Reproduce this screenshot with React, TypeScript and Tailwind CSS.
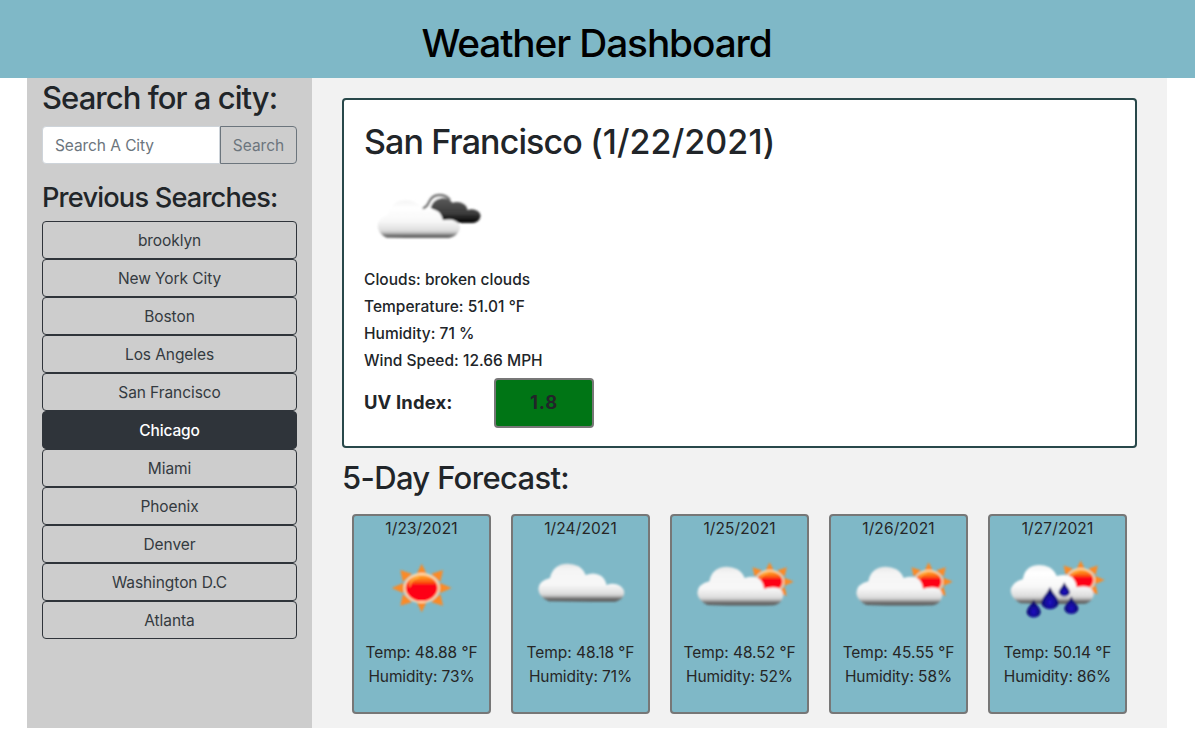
import type { ReactNode } from "react";

const cities = [
  "brooklyn",
  "New York City",
  "Boston",
  "Los Angeles",
  "San Francisco",
  "Chicago",
  "Miami",
  "Phoenix",
  "Denver",
  "Washington D.C",
  "Atlanta",
];

const activeCity = "Chicago";

const conditions = [
  "Clouds: broken clouds",
  "Temperature: 51.01 °F",
  "Humidity: 71 %",
  "Wind Speed: 12.66 MPH",
];

function Gradients() {
  return (
    <svg width="0" height="0" className="absolute" aria-hidden="true">
      <defs>
        <linearGradient id="cloud" x1="0" y1="0" x2="0" y2="1">
          <stop offset="0" stopColor="#e6e6e6" />
          <stop offset="0.15" stopColor="#f4f4f4" />
          <stop offset="0.55" stopColor="#f8f8f8" />
          <stop offset="0.8" stopColor="#dcdcdc" />
          <stop offset="0.86" stopColor="#b4b4b4" />
          <stop offset="0.91" stopColor="#747474" />
          <stop offset="1" stopColor="#555555" />
        </linearGradient>
        <linearGradient id="paleCloud" x1="0" y1="0" x2="0" y2="1">
          <stop offset="0" stopColor="#f4f4f4" />
          <stop offset="0.2" stopColor="#ffffff" />
          <stop offset="0.55" stopColor="#f8f8f8" />
          <stop offset="0.8" stopColor="#dddddd" />
          <stop offset="0.87" stopColor="#b8b8b8" />
          <stop offset="0.92" stopColor="#747474" />
          <stop offset="1" stopColor="#5a5a5a" />
        </linearGradient>
        <linearGradient id="darkCloud" x1="0" y1="0" x2="0" y2="1">
          <stop offset="0" stopColor="#5a5a5a" />
          <stop offset="0.6" stopColor="#3c3c3c" />
          <stop offset="0.85" stopColor="#181818" />
          <stop offset="1" stopColor="#000000" />
        </linearGradient>
        <linearGradient id="sun" x1="0" y1="0" x2="0" y2="1">
          <stop offset="0" stopColor="#ffb23a" />
          <stop offset="0.15" stopColor="#ff8c1c" />
          <stop offset="0.32" stopColor="#fb4a10" />
          <stop offset="0.4" stopColor="#fd0015" />
          <stop offset="1" stopColor="#ff0018" />
        </linearGradient>
        <radialGradient id="drop" cx="0.5" cy="0.68" r="0.55">
          <stop offset="0" stopColor="#1f14c4" />
          <stop offset="0.5" stopColor="#120a96" />
          <stop offset="1" stopColor="#07045a" />
        </radialGradient>
        <filter id="soft" x="-10%" y="-10%" width="120%" height="120%">
          <feGaussianBlur stdDeviation="2.6" />
        </filter>
      </defs>
    </svg>
  );
}

function BrokenClouds() {
  return (
    <svg width="140" height="70" viewBox="0 0 420 210" className="block">
      <g filter="url(#soft)">
        <path
          d="M186 87 Q202 80 207 66 Q216 46 238 45 Q258 45 270 60"
          fill="none"
          stroke="#777777"
          strokeWidth="7"
        />
        <path
          d="M212 84 Q218 59 246 55 Q266 54 277 68 Q297 62 311 72 Q322 79 322 90 Q340 85 353 93 Q364 102 361 112 Q356 128 338 129 L282 129 L250 122 L236 96 Z"
          fill="url(#darkCloud)"
        />
        <path
          d="M209 84 Q216 60 240 51"
          fill="none"
          stroke="#eeeeee"
          strokeWidth="3"
        />
        <path
          d="M80 173 Q56 162 53 140 Q52 114 84 104 Q90 74 116 64 Q150 54 176 74 Q186 82 192 90 Q222 82 240 100 Q247 110 248 121 Q282 112 297 132 Q304 148 292 160 Q284 171 266 174 Q170 175 80 173 Z"
          fill="url(#paleCloud)"
        />
      </g>
    </svg>
  );
}

const rays =
  "M0 -73 L16 -40 L-16 -40 Z M64 -54 L56 -18 L28 -42 Z M90 0 L54 16 L54 -16 Z M64 53 L28 42 L56 18 Z M0 73 L-16 40 L16 40 Z M-64 53 L-56 18 L-28 42 Z M-90 0 L-54 -16 L-54 16 Z M-64 -54 L-28 -42 L-56 -18 Z";

function SunShape({ transform }: { transform: string }) {
  return (
    <g transform={transform}>
      <path d={rays} fill="#fb8a26" />
      <ellipse rx="51" ry="42" fill="url(#sun)" stroke="#ffe0b4" strokeWidth="6" />
      <path
        d="M-36 -6 Q-34 -26 -10 -32"
        fill="none"
        stroke="#ffc94a"
        strokeWidth="6"
        strokeLinecap="round"
        opacity="0.6"
      />
    </g>
  );
}

function SunIcon() {
  return (
    <svg width="135" height="75" viewBox="-48 0 405 225" className="block">
      <g filter="url(#soft)">
        <SunShape transform="translate(155 114)" />
      </g>
    </svg>
  );
}

function CloudIcon() {
  return (
    <svg width="135" height="75" viewBox="-51 0 405 225" className="block">
      <g filter="url(#soft)">
        <path
          d="M56 154 Q27 142 25 117 Q26 92 60 84 Q66 54 92 44 Q120 36 146 49 Q160 58 167 75 Q194 64 214 78 Q228 90 229 105 Q252 97 270 107 Q286 118 282 134 Q278 149 256 155 Q150 156 56 154 Z"
          fill="url(#cloud)"
        />
      </g>
    </svg>
  );
}

function SunCloudIcon() {
  return (
    <svg width="135" height="75" viewBox="-54 0 405 225" className="block">
      <g filter="url(#soft)">
        <SunShape transform="translate(239 95) scale(0.8)" />
        <path
          d="M52 165 Q25 152 22 130 Q23 102 58 94 Q64 62 90 53 Q118 45 142 58 Q158 68 164 84 Q186 76 204 84 Q220 94 222 116 Q256 106 272 118 Q283 130 278 144 Q273 161 252 166 Q150 168 52 165 Z"
          fill="url(#cloud)"
        />
      </g>
    </svg>
  );
}

const dropPath =
  "M0 -33 Q7 -18 19 -4 Q30 12 24 22 Q15 34 0 34 Q-15 34 -24 22 Q-30 12 -19 -4 Q-7 -18 0 -33 Z";

function RainIcon() {
  return (
    <svg width="135" height="75" viewBox="-30 0 405 225" className="block">
      <g filter="url(#soft)">
        <SunShape transform="translate(242 90) scale(0.8)" />
        <path
          d="M62 160 Q35 148 32 124 Q33 98 68 88 Q74 56 98 48 Q124 41 148 52 Q164 62 170 78 Q198 70 216 82 Q228 94 230 112 Q258 104 274 116 Q285 128 279 142 Q273 157 256 161 Q160 163 62 160 Z"
          fill="url(#paleCloud)"
        />
        <path d={dropPath} transform="translate(150 144)" fill="url(#drop)" />
        <path d={dropPath} transform="translate(101 175) scale(0.8)" fill="url(#drop)" />
        <path d={dropPath} transform="translate(214 165) scale(0.8)" fill="url(#drop)" />
        <path d={dropPath} transform="translate(193 118) scale(0.64)" fill="url(#drop)" />
      </g>
    </svg>
  );
}

const forecast: { date: string; temp: string; humidity: string; icon: ReactNode }[] = [
  { date: "1/23/2021", temp: "48.88", humidity: "73", icon: <SunIcon /> },
  { date: "1/24/2021", temp: "48.18", humidity: "71", icon: <CloudIcon /> },
  { date: "1/25/2021", temp: "48.52", humidity: "52", icon: <SunCloudIcon /> },
  { date: "1/26/2021", temp: "45.55", humidity: "58", icon: <SunCloudIcon /> },
  { date: "1/27/2021", temp: "50.14", humidity: "86", icon: <RainIcon /> },
];

function Sidebar() {
  return (
    <aside className="w-[285px] shrink-0 bg-[#cdcdcd] px-[15px]">
      <h2 className="h-[39px] text-[31px] leading-[39px] font-medium tracking-[-0.95px] whitespace-nowrap">
        Search for a city:
      </h2>
      <form className="mt-[9px] flex h-[38px]" onSubmit={(e) => e.preventDefault()}>
        <input
          type="text"
          placeholder="Search A City"
          className="w-[178px] rounded-l border border-[#ced4da] bg-white px-3 pt-0.5 tracking-[-0.08px] outline-none placeholder:text-[#6c757d]"
        />
        <button
          type="submit"
          className="flex-1 rounded-r border border-[#6c757d] pt-0.5 text-[#6c757d]"
        >
          Search
        </button>
      </form>
      <h3 className="mt-[17px] h-[34px] text-[27.2px] leading-[34px] font-medium tracking-[-0.82px] whitespace-nowrap">
        Previous Searches:
      </h3>
      <div className="mt-[6px] flex flex-col">
        {cities.map((city) => (
          <button
            key={city}
            type="button"
            className={
              city === activeCity
                ? "h-[38px] rounded border border-[#2f343a] bg-[#2f343a] pt-0.5 font-medium tracking-[-0.15px] text-white"
                : "h-[38px] rounded border border-[#2f343a] pt-0.5 tracking-[-0.08px] text-[#343a40]"
            }
          >
            {city}
          </button>
        ))}
      </div>
    </aside>
  );
}

function CurrentWeather() {
  return (
    <section className="h-[350px] rounded border-2 border-[#28484a] bg-white px-5 pt-5">
      <h1 className="h-[43px] text-[34px] leading-[43px] font-medium tracking-[-0.88px]">
        San Francisco <span className="tracking-[0.08px]">(1/22/2021)</span>
      </h1>
      <div className="-ml-1 mt-[17px]">
        <BrokenClouds />
      </div>
      <div className="mt-4 font-medium">
        {conditions.map((line) => (
          <p key={line} className="h-[27px] tracking-[0.02px] leading-[27px]">
            {line}
          </p>
        ))}
      </div>
      <div className="mt-1 flex h-[50px] items-center text-[18.4px] font-bold">
        <span className="w-[130px] pb-0.5 tracking-[0.15px]">UV Index:</span>
        <span className="flex h-[50px] w-[100px] items-center justify-center rounded border-2 border-[#777777] bg-[#007515] pb-0.5 tracking-[0.8px]">
          1.8
        </span>
      </div>
    </section>
  );
}

export default function App() {
  return (
    <div className="min-h-screen bg-white font-['Inter',sans-serif] text-[15.5px] leading-6 text-[#212529]">
      <Gradients />
      <header className="h-[78px] bg-[#7fb8c7] pt-[19px] pr-[2px] text-center">
        <h1 className="text-[38.8px] leading-[48px] font-medium tracking-[-1.12px] text-black">
          Weather Dashboard
        </h1>
      </header>
      <main className="ml-[27px] flex h-[650px] w-[1140px] bg-[#f2f2f2]">
        <Sidebar />
        <div className="flex-1 px-[30px] pt-5">
          <CurrentWeather />
          <h2 className="mt-[10px] h-[39px] text-[31px] leading-[39px] font-medium tracking-[-0.66px]">
            5-Day Forecast:
          </h2>
          <div className="mt-[17px] flex gap-5 px-[10px]">
            {forecast.map((day) => (
              <article
                key={day.date}
                className="h-[200px] w-[139px] rounded border-2 border-[#777777] bg-[#7fb8c7] pt-px text-center text-[#262626]"
              >
                <p className="tracking-[0.1px]">{day.date}</p>
                <div className="mt-[9px] mb-4">{day.icon}</div>
                <p className="tracking-[-0.05px]">Temp: {day.temp} °F</p>
                <p className="tracking-[-0.1px]">Humidity: {day.humidity}%</p>
              </article>
            ))}
          </div>
        </div>
      </main>
    </div>
  );
}
